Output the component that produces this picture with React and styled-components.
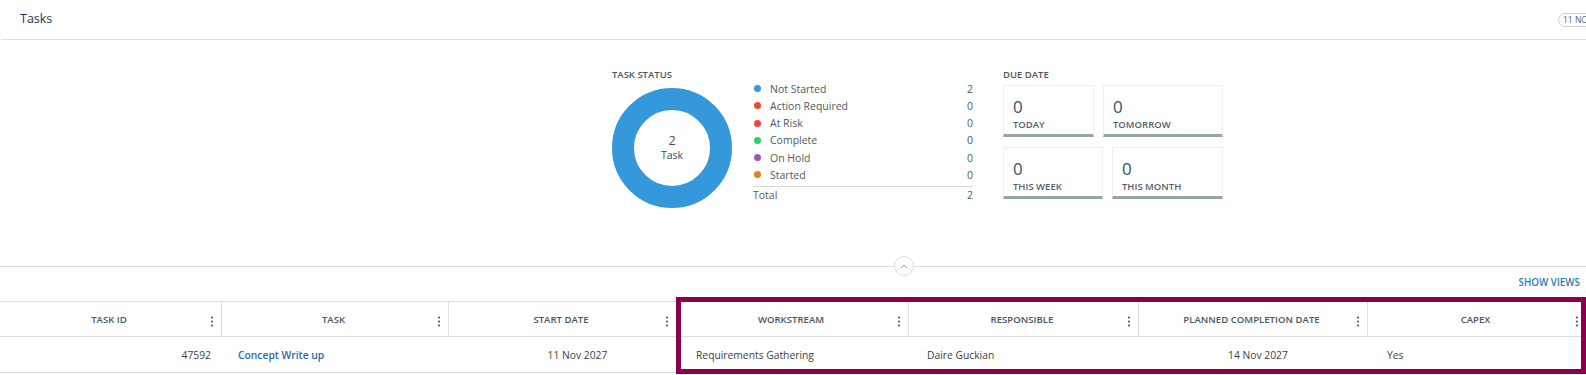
import React from "react";
import styled, { createGlobalStyle } from "styled-components";

const Global = createGlobalStyle`
  html, body { margin: 0; padding: 0; background: #fff; }
  body {
    font-family: "Open Sans", "Noto Sans", "Liberation Sans", sans-serif;
    color: #333;
    overflow: hidden;
  }
  * { box-sizing: border-box; }
`;

const Page = styled.div`
  width: 1586px;
  height: 375px;
  overflow: hidden;
`;

const TopBar = styled.header`
  display: flex;
  align-items: center;
  height: 40px;
  padding-left: 19px;
  border-bottom: 1px solid #dddddd;
  margin-left: 1px;
`;

const Title = styled.h1`
  margin: 0;
  font-size: 12.5px;
  font-weight: 400;
  color: #1b3a4b;
  line-height: 1;
`;

const BadgeClip = styled.div`
  margin-left: auto;
  width: 28px;
  overflow: hidden;
  display: flex;
`;

const Badge = styled.span`
  flex: none;
  white-space: nowrap;
  border: 1px solid #cfcfcf;
  border-radius: 8px;
  padding: 0 4px;
  font-size: 8.5px;
  line-height: 12px;
  color: #55606a;
`;

const Summary = styled.section`
  display: flex;
  height: 216px;
  padding: 29px 0 0 612px;
`;

const StatusBlock = styled.div`
  display: flex;
  gap: 21px;
`;

const DonutCol = styled.div`
  display: flex;
  flex-direction: column;
`;

const SectionLabel = styled.div`
  font-size: 9.5px;
  font-weight: 600;
  line-height: 12px;
  color: #4b5660;
  text-transform: uppercase;
`;

const DonutWrap = styled.div`
  position: relative;
  width: 120px;
  height: 120px;
  margin-top: 7px;
`;

const DonutCenter = styled.div`
  position: absolute;
  inset: 0;
  display: flex;
  flex-direction: column;
  align-items: center;
  justify-content: center;
  color: #3f4a54;
  line-height: 15px;
`;

const CenterValue = styled.span`
  font-size: 12.5px;
`;

const CenterUnit = styled.span`
  font-size: 10.5px;
`;

const Legend = styled.div`
  width: 220px;
  margin-top: 11px;
  display: flex;
  flex-direction: column;
`;

const LegendRow = styled.div`
  display: flex;
  align-items: center;
  height: 17.25px;
  font-size: 10.5px;
  color: #4f5962;
  padding-left: 1px;
`;

const Dot = styled.span`
  width: 7px;
  height: 7px;
  border-radius: 50%;
  background: ${(p) => p.$color};
  margin-right: 9px;
  flex: none;
`;

const LegendLabel = styled.span`
  flex: 1;
`;

const LegendValue = styled.span`
  text-align: right;
`;

const TotalRow = styled.div`
  display: flex;
  align-items: center;
  height: 16px;
  margin-top: 2px;
  border-top: 1px solid #d9d9d9;
  padding-top: 1px;
  font-size: 10.5px;
  color: #4f5962;
`;

const DueBlock = styled.div`
  margin-left: 30px;
  display: flex;
  flex-direction: column;
`;

const CardGrid = styled.div`
  margin-top: 4px;
  display: flex;
  flex-direction: column;
  gap: 10px;
`;

const CardRow = styled.div`
  display: flex;
  gap: 9px;
`;

const Card = styled.div`
  width: ${(p) => p.$w}px;
  height: 52px;
  border: 1px solid #efefef;
  border-bottom: 3px solid #95a5a6;
  padding: 11px 0 0 9px;
  display: flex;
  flex-direction: column;
`;

const CardValue = styled.div`
  font-size: 17px;
  line-height: 20px;
  color: #3d4e5e;
`;

const CardLabel = styled.div`
  margin-top: 2px;
  font-size: 9.5px;
  font-weight: 600;
  line-height: 12px;
  color: #55606a;
  text-transform: uppercase;
`;

const Collapse = styled.div`
  display: grid;
  grid-template-columns: 894px 20px 1fr;
  align-items: center;
  height: 20px;
`;

const Rule = styled.div`
  height: 1px;
  background: #dcdcdc;
`;

const CircleBtn = styled.button`
  width: 20px;
  height: 20px;
  border-radius: 50%;
  border: 1px solid #dcdcdc;
  background: #fff;
  padding: 0;
  display: flex;
  align-items: center;
  justify-content: center;
`;

const ViewsBar = styled.div`
  height: 25px;
  display: flex;
  justify-content: flex-end;
  padding-right: 6px;
`;

const ViewsLink = styled.a`
  font-size: 9.8px;
  font-weight: 600;
  line-height: 14px;
  color: #2c7bb6;
  text-transform: uppercase;
  cursor: pointer;
`;

const TableWrap = styled.div`
  position: relative;
`;

const cols = "222px 227px 228px 232px 230px 229px 1fr";

const HeadRow = styled.div`
  display: grid;
  grid-template-columns: ${cols};
  height: 36px;
  border-top: 1px solid #dddddd;
  border-bottom: 1px solid #dddddd;
`;

const HeadCell = styled.div`
  display: flex;
  align-items: center;
  padding: 0 7px 0 8px;
  border-right: ${(p) => (p.$last ? "none" : "1px solid #dddddd")};
`;

const HeadLabel = styled.span`
  flex: 1;
  text-align: center;
  font-size: 9.6px;
  font-weight: 600;
  color: #4b5660;
  text-transform: uppercase;
  white-space: nowrap;
`;

const Kebab = styled.svg`
  flex: none;
  margin-top: 5px;
`;

const BodyRow = styled.div`
  display: grid;
  grid-template-columns: ${cols};
  height: 36px;
  border-bottom: 1px solid #dddddd;
`;

const Cell = styled.div`
  display: flex;
  align-items: center;
  justify-content: ${(p) =>
    p.$align === "right" ? "flex-end" : p.$align === "center" ? "center" : "flex-start"};
  padding: 0 11px 0 ${(p) => p.$pl ?? 17}px;
  font-size: 10.3px;
  color: #3a3f44;
  white-space: nowrap;
`;

const TaskLink = styled.a`
  color: #2a6aa6;
  font-weight: 600;
  cursor: pointer;
`;

const Highlight = styled.div`
  position: absolute;
  top: -4px;
  left: 676px;
  right: 0;
  bottom: -1px;
  border: 5px solid #8b004e;
  pointer-events: none;
`;

const legend = [
  ["Not Started", "#3498db", 2],
  ["Action Required", "#e74c3c", 0],
  ["At Risk", "#ef4836", 0],
  ["Complete", "#2ecc71", 0],
  ["On Hold", "#9b59b6", 0],
  ["Started", "#e67e22", 0],
];

const headers = [
  "Task ID",
  "Task",
  "Start Date",
  "Workstream",
  "Responsible",
  "Planned Completion Date",
  "Capex",
];

const KebabIcon = () => (
  <Kebab width="4" height="11" viewBox="0 0 4 11">
    <circle cx="2" cy="1.5" r="1.1" fill="#555" />
    <circle cx="2" cy="5.5" r="1.1" fill="#555" />
    <circle cx="2" cy="9.5" r="1.1" fill="#555" />
  </Kebab>
);

export default function App() {
  return (
    <Page>
      <Global />
      <TopBar>
        <Title>Tasks</Title>
        <BadgeClip>
          <Badge>11 NOV 2027</Badge>
        </BadgeClip>
      </TopBar>

      <Summary>
        <StatusBlock>
          <DonutCol>
            <SectionLabel>Task Status</SectionLabel>
            <DonutWrap>
              <svg width="120" height="120" viewBox="0 0 120 120">
                <circle cx="60" cy="60" r="49" fill="none" stroke="#3498db" strokeWidth="22" />
              </svg>
              <DonutCenter>
                <CenterValue>2</CenterValue>
                <CenterUnit>Task</CenterUnit>
              </DonutCenter>
            </DonutWrap>
          </DonutCol>
          <Legend>
            {legend.map(([label, color, v]) => (
              <LegendRow key={label}>
                <Dot $color={color} />
                <LegendLabel>{label}</LegendLabel>
                <LegendValue>{v}</LegendValue>
              </LegendRow>
            ))}
            <TotalRow>
              <LegendLabel>Total</LegendLabel>
              <LegendValue>2</LegendValue>
            </TotalRow>
          </Legend>
        </StatusBlock>

        <DueBlock>
          <SectionLabel>Due Date</SectionLabel>
          <CardGrid>
            <CardRow>
              <Card $w={91}>
                <CardValue>0</CardValue>
                <CardLabel>Today</CardLabel>
              </Card>
              <Card $w={120}>
                <CardValue>0</CardValue>
                <CardLabel>Tomorrow</CardLabel>
              </Card>
            </CardRow>
            <CardRow>
              <Card $w={100}>
                <CardValue>0</CardValue>
                <CardLabel>This Week</CardLabel>
              </Card>
              <Card $w={111}>
                <CardValue>0</CardValue>
                <CardLabel>This Month</CardLabel>
              </Card>
            </CardRow>
          </CardGrid>
        </DueBlock>
      </Summary>

      <Collapse>
        <Rule />
        <CircleBtn aria-label="Collapse">
          <svg width="8" height="5" viewBox="0 0 8 5">
            <polyline points="0.8,4.2 4,1 7.2,4.2" fill="none" stroke="#8a9aaa" strokeWidth="1" />
          </svg>
        </CircleBtn>
        <Rule />
      </Collapse>

      <ViewsBar>
        <ViewsLink>Show Views</ViewsLink>
      </ViewsBar>

      <TableWrap>
        <HeadRow>
          {headers.map((h, i) => (
            <HeadCell key={h} $last={i === headers.length - 1}>
              <HeadLabel>{h}</HeadLabel>
              <KebabIcon />
            </HeadCell>
          ))}
        </HeadRow>
        <BodyRow>
          <Cell $align="right">47592</Cell>
          <Cell $pl={16}>
            <TaskLink>Concept Write up</TaskLink>
          </Cell>
          <Cell $align="center" $pl={40}>11 Nov 2027</Cell>
          <Cell $pl={19}>Requirements Gathering</Cell>
          <Cell $pl={18}>Daire Guckian</Cell>
          <Cell $align="center" $pl={20}>14 Nov 2027</Cell>
          <Cell $pl={19}>Yes</Cell>
        </BodyRow>
        <Highlight />
      </TableWrap>
    </Page>
  );
}
